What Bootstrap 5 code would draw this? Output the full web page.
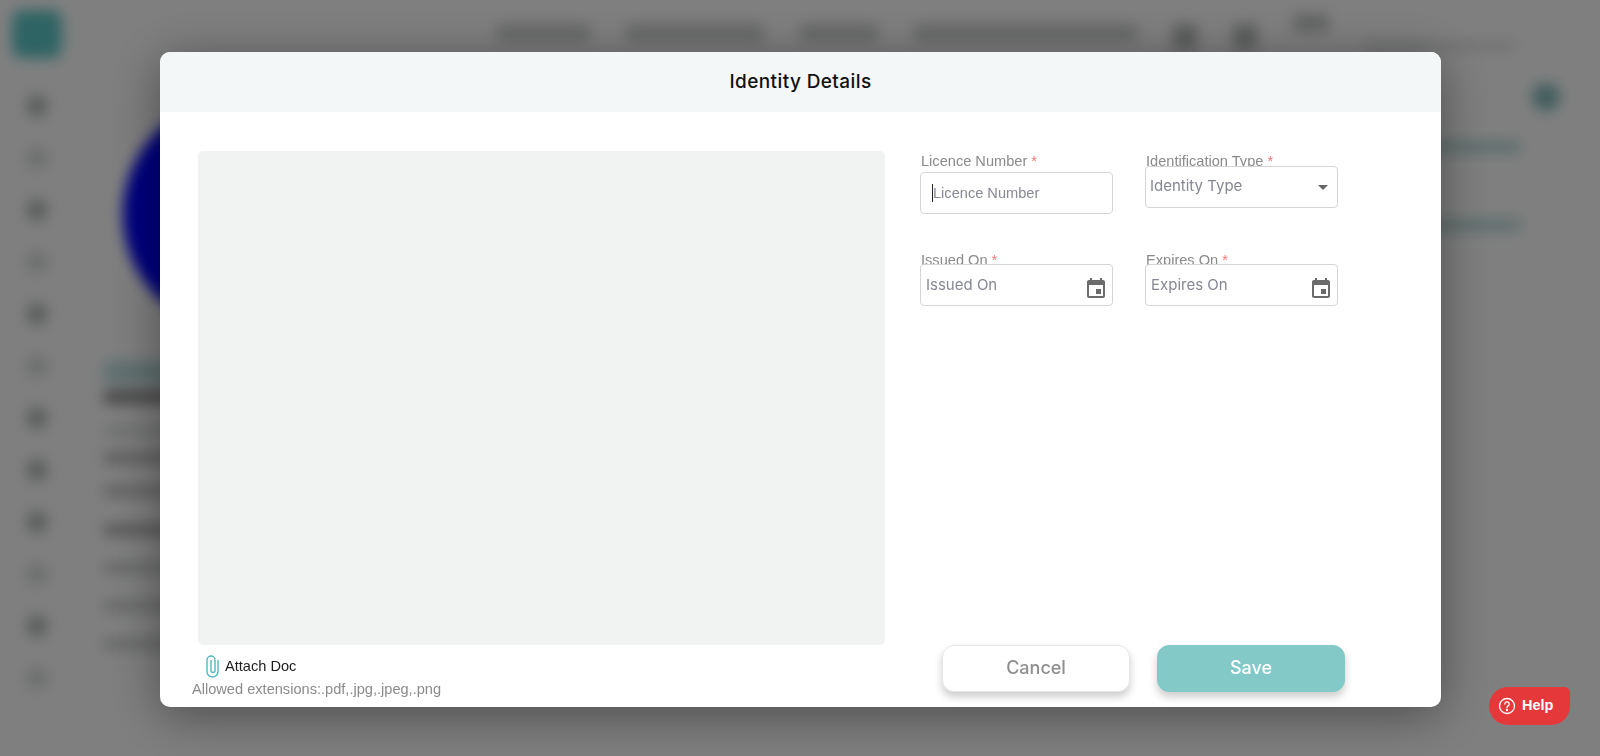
<!DOCTYPE html>
<html lang="en">
<head>
<meta charset="utf-8">
<title>Identity Details</title>
<link href="https://cdn.jsdelivr.net/npm/bootstrap@5.3.0/dist/css/bootstrap.min.css" rel="stylesheet">
<style>
html,body{height:756px;overflow:hidden;background:#fff}
body{font-family:"Liberation Sans",Arial,sans-serif}
.page-under{height:756px;filter:blur(7px);background:#fff}
.side-under{width:72px;flex:none;padding-top:10px}
.logo-under{width:50px;height:48px;border-radius:10px;background:#5ec8c8;margin:0 0 37px 12px}
.ico-under{width:22px;height:22px;border-radius:50%;background:#b6baba;margin:0 0 30px 26px}
.ico-under.dim{background:#dadcdc}
.main-under{flex:1;min-width:0}
.top-under{height:68px;padding:24px 0 0 425px}
.top-under i{display:block;height:18px;background:#d0d2d2;border-radius:3px;margin-right:36px}
.top-under i:nth-child(1){width:93px}
.top-under i:nth-child(2){width:138px}
.top-under i:nth-child(3){width:78px}
.top-under i:nth-child(4){width:223px}
.top-under i:nth-child(5),.top-under i:nth-child(6){width:24px;height:26px;background:#b9bbbb}
.top-under i:nth-child(7){width:36px;margin-top:-10px;background:#c6c8c8}
.top-under i:nth-child(8){width:150px;height:8px;margin:18px 0 0 0;background:#dcdede}
.left-under{width:1300px;flex:none}
.disc-under{width:234px;height:234px;border-radius:50%;background:#00f;margin:29px 0 0 51px}
.strip-under{width:300px;height:22px;background:#bfe0e0;margin:30px 0 0 32px}
.line-under{width:300px;height:12px;background:#d0d2d2;margin:26px 0 0 32px}
.line-under.l1{background:#909090;margin-top:7px;height:14px}
.line-under.l2{background:#e0e2e2;margin-top:21px}
.line-under.l3{background:#bcbcbc;margin-top:15px}
.line-under.l4{background:#c4c4c4;margin-top:21px}
.line-under.l5{background:#b0b0b0;margin-top:27px}
.right-under{padding:15px 0 0 52px}
.dot-under{width:28px;height:28px;border-radius:50%;background:#86bcbc;margin-left:108px}
.txt-under{width:96px;height:12px;background:#bcdada;margin-top:30px}
.txt-under.next{margin-top:66px}
.veil{position:fixed;inset:0;background:rgba(0,0,0,.5)}
.dlg{position:fixed;left:160px;top:52px;width:1281px;height:655px;background:#fff;border-radius:10px;box-shadow:0 8px 50px rgba(0,0,0,.4);overflow:hidden}
.dlg-head{height:60px;background:#f4f7f8;font:500 19px Inter,"Open Sans",sans-serif;letter-spacing:.4px;color:#111;padding-bottom:2px}
.dlg-body{height:595px;padding:39px 0 0 38px}
.doc-col{width:687px;flex:none}
.doc-view{height:494px;background:#f1f3f2;border-radius:5px}
.attach{padding:9px 0 0 8px;font-size:14.6px;color:#1d1d1d;line-height:24px;gap:6px}
.attach svg{flex:none}
.allowed{font-size:14.6px;color:#8b8b8b;margin:2px 0 0 -6px;line-height:18px}
.form-col{margin-left:35px;width:425px;padding-bottom:15px}
.fld-grid{display:grid;grid-template-columns:193px 193px;column-gap:32px;row-gap:0}
.fld{position:relative;height:99px;padding-top:1px}
.fld label{display:block;font-size:14.6px;line-height:18px;color:#8a8a8a;margin:0 0 0 1px}
.req{color:#f77}
.ctl.form-control,.ctl.form-select{height:42px;border:1px solid #d3d5d7;border-radius:4px;font:400 15px Inter,"Open Sans",sans-serif;color:#868894;box-shadow:none;background-color:#fff;position:relative}
.ctl::placeholder{color:#868894;opacity:1}
.ctl.lic{margin-top:2px;padding:0 12px 0;font:400 14.6px "Liberation Sans",Arial,sans-serif}
.ctl.typ{margin-top:-4px;padding:0 30px 4px 4px;background-position:right 6px center;background-size:16px 16px;background-image:url("data:image/svg+xml,%3Csvg xmlns='http://www.w3.org/2000/svg' viewBox='0 0 16 16'%3E%3Cpath fill='%23666' d='M3 6h10l-5 5z'/%3E%3C/svg%3E")}
.ctl.dat{margin-top:-5px;padding:0 40px 2px 5px}
.caret-mark{position:absolute;left:12px;top:33px;width:1px;height:18px;background:#222}
.cal{position:absolute;right:5px;top:27px;width:24px;height:24px;fill:#6b6b6b}
.act{width:188px;height:47px;border-radius:12px;font:500 18px Inter,"Open Sans",sans-serif;box-shadow:0 5px 9px rgba(0,0,0,.2);padding:0 0 2px}
.act-c.btn{background:#fff;border:1px solid #e6e6e6;color:#8f8f8f}
.act-s.btn{background:#82c9c8;border:1px solid #82c9c8;color:#fff}
.act-row{gap:27px;padding-left:22px}
.help-tab{position:fixed;left:1489px;top:687px;width:81px;height:38px;background:#e5383b;color:#fff;border-radius:22px 6px 22px 22px;font-weight:700;font-size:14.5px;gap:6px;padding-left:9px}
</style>
</head>
<body>
<div class="page-under d-flex" aria-hidden="true">
  <div class="side-under">
    <div class="logo-under"></div>
    <div class="ico-under"></div><div class="ico-under dim"></div><div class="ico-under"></div><div class="ico-under dim"></div><div class="ico-under"></div><div class="ico-under dim"></div><div class="ico-under"></div><div class="ico-under"></div><div class="ico-under"></div><div class="ico-under dim"></div><div class="ico-under"></div><div class="ico-under dim"></div>
  </div>
  <div class="main-under">
    <div class="top-under d-flex">
      <i></i><i></i><i></i><i></i><i></i><i></i><i></i><i></i>
    </div>
    <div class="d-flex">
      <div class="left-under">
        <div class="disc-under"></div>
        <div class="strip-under"></div>
        <div class="line-under l1"></div>
        <div class="line-under l2"></div>
        <div class="line-under l3"></div>
        <div class="line-under l4"></div>
        <div class="line-under l5"></div>
        <div class="line-under"></div>
        <div class="line-under"></div>
        <div class="line-under"></div>
      </div>
      <div class="right-under">
        <div class="dot-under"></div>
        <div class="txt-under"></div>
        <div class="txt-under next"></div>
      </div>
    </div>
  </div>
</div>
<div class="veil"></div>

<div class="dlg d-flex flex-column" role="dialog">
  <div class="dlg-head d-flex align-items-center justify-content-center">Identity Details</div>
  <div class="dlg-body d-flex">
    <div class="doc-col">
      <div class="doc-view"></div>
      <div class="attach d-flex align-items-center">
        <svg width="13" height="24" viewBox="0 0 13 24" fill="none" stroke="#4fb9bd" stroke-width="1.4" stroke-linecap="round"><path d="M12 6.500V17.500a5.500 5.500 0 0 1-11 0V6a4 4 0 0 1 8 0V16.500a2 2 0 0 1-4 0V6.500"/></svg>
        <span>Attach Doc</span>
      </div>
      <div class="allowed">Allowed extensions:.pdf,.jpg,.jpeg,.png</div>
    </div>
    <div class="form-col d-flex flex-column justify-content-between">
      <div class="fld-grid">
        <div class="fld">
          <label>Licence Number <span class="req">*</span></label>
          <input class="form-control ctl lic" placeholder="Licence Number">
          <span class="caret-mark"></span>
        </div>
        <div class="fld">
          <label>Identification Type <span class="req">*</span></label>
          <select class="form-select ctl typ"><option>Identity Type</option></select>
        </div>
        <div class="fld">
          <label>Issued On <span class="req">*</span></label>
          <input class="form-control ctl dat" placeholder="Issued On">
          <svg class="cal" viewBox="0 0 24 24"><path d="M17 12h-5v5h5v-5zM16 1v2H8V1H6v2H5c-1.110 0-1.990.9-1.990 2L3 19c0 1.100.89 2 2 2h14c1.100 0 2-.9 2-2V5c0-1.100-.9-2-2-2h-1V1h-2zm3 18H5V8h14v11z"/></svg>
        </div>
        <div class="fld">
          <label>Expires On <span class="req">*</span></label>
          <input class="form-control ctl dat" placeholder="Expires On">
          <svg class="cal" viewBox="0 0 24 24"><path d="M17 12h-5v5h5v-5zM16 1v2H8V1H6v2H5c-1.110 0-1.990.9-1.990 2L3 19c0 1.100.89 2 2 2h14c1.100 0 2-.9 2-2V5c0-1.100-.9-2-2-2h-1V1h-2zm3 18H5V8h14v11z"/></svg>
        </div>
      </div>
      <div class="act-row d-flex">
        <button type="button" class="btn act act-c">Cancel</button>
        <button type="button" class="btn act act-s">Save</button>
      </div>
    </div>
  </div>
</div>

<div class="help-tab d-flex align-items-center">
  <svg width="18" height="18" viewBox="0 0 18 18" fill="none" stroke="#fff" stroke-width="1.300"><circle cx="9" cy="9" r="7.500"/><path d="M6.800 7a2.200 2.200 0 1 1 3.400 1.900c-.8.5-1.200.9-1.200 1.800" stroke-linecap="round"/><circle cx="9" cy="13" r=".5" fill="#fff"/></svg>
  <span>Help</span>
</div>
<script src="https://cdn.jsdelivr.net/npm/bootstrap@5.3.0/dist/js/bootstrap.bundle.min.js"></script>
</body>
</html>
